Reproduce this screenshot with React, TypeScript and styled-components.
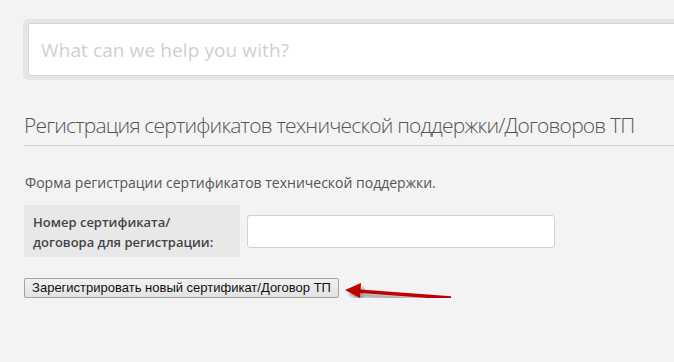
import * as React from "react";
import styled, { createGlobalStyle } from "styled-components";

const GlobalStyle = createGlobalStyle`
    html, body {
        margin: 0;
        padding: 0;
        background: #f3f3f3;
        overflow: hidden;
    }
`

const Page = styled.div`
    padding: 19px 0 0 23px;
    width: 800px;
    font-family: "Open Sans", "Liberation Sans", sans-serif;
`

const SearchFrame = styled.div`
    padding: 4px 0 4px 5px;
    background: #e6e6e6;
    border-radius: 5px;
`

const SearchInput = styled.input`
    box-sizing: border-box;
    display: block;
    width: 100%;
    height: 53px;
    border: 1px solid #d2d6da;
    border-radius: 3px;
    background: #fff;
    padding: 0 12px;
    font-family: "Open Sans", sans-serif;
    font-size: 19px;
    letter-spacing: 0.1px;
    color: #333;
    outline: none;
    &::placeholder {
        color: #cfcfcf;
    }
`

const Title = styled.h2`
    margin: 30px 0 0 1px;
    padding-bottom: 5px;
    border-bottom: 1px solid #d0d0d0;
    font-family: "Open Sans", sans-serif;
    font-weight: 300;
    font-size: 21px;
    letter-spacing: -0.8px;
    white-space: nowrap;
    line-height: 30px;
    color: #555;
    width: 660px;
`

const Description = styled.p`
    margin: 27px 0 0 2px;
    font-size: 14px;
    line-height: 20px;
    color: #555;
`

const FieldRow = styled.div`
    display: flex;
    align-items: center;
    margin: 12px 0 0 1px;
`

const Label = styled.label`
    box-sizing: border-box;
    width: 216px;
    height: 52px;
    padding: 7px 9px;
    background: #e8e8e9;
    font-family: "Open Sans", sans-serif;
    font-weight: 600;
    font-size: 13px;
    line-height: 20px;
    color: #444;
`

const TextField = styled.input`
    box-sizing: border-box;
    width: 308px;
    height: 33px;
    margin-left: 7px;
    border: 1px solid #cdd2d6;
    border-radius: 3px;
    background: #fff;
    outline: none;
`

const ButtonRow = styled.div`
    position: relative;
    margin: 18px 0 0 1px;
`

const SubmitButton = styled.button`
    box-sizing: border-box;
    height: 20px;
    width: 315px;
    padding: 0 6px;
    border: 1px solid #a3a3a3;
    border-radius: 2px;
    background: linear-gradient(#f2f2f2, #e2e2e2);
    font-family: "Liberation Sans", Arial, sans-serif;
    font-size: 13px;
    color: #111;
`

const Arrow = styled.svg`
    position: absolute;
    left: 291px;
    top: -6px;
`

function PointerArrow() {
    return (
        <Arrow width="150" height="40" viewBox="0 0 150 40">
            <defs>
                <filter id="blur" x="-20%" y="-50%" width="140%" height="200%">
                    <feGaussianBlur stdDeviation="1.6" />
                </filter>
            </defs>
            <g filter="url(#blur)" opacity="0.55" transform="translate(3 4)">
                <line x1="42" y1="22" x2="136" y2="29" stroke="#555" strokeWidth="3.5" />
                <polygon points="30,21 46,14 45,29" fill="#555" />
            </g>
            <line x1="42" y1="22" x2="136" y2="29" stroke="#c00000" strokeWidth="3.5" />
            <polygon points="30,21 46,14 45,29" fill="#c00000" />
        </Arrow>
    )
}

function App() {
    return (
        <Page>
            <GlobalStyle />
            <SearchFrame>
                <SearchInput placeholder="What can we help you with?" />
            </SearchFrame>
            <Title>Регистрация сертификатов технической поддержки/Договоров ТП</Title>
            <Description>Форма регистрации сертификатов технической поддержки.</Description>
            <FieldRow>
                <Label>Номер сертификата/<br />договора для регистрации:</Label>
                <TextField />
            </FieldRow>
            <ButtonRow>
                <SubmitButton>Зарегистрировать новый сертификат/Договор ТП</SubmitButton>
                <PointerArrow />
            </ButtonRow>
        </Page>
    )
}

export default App;
